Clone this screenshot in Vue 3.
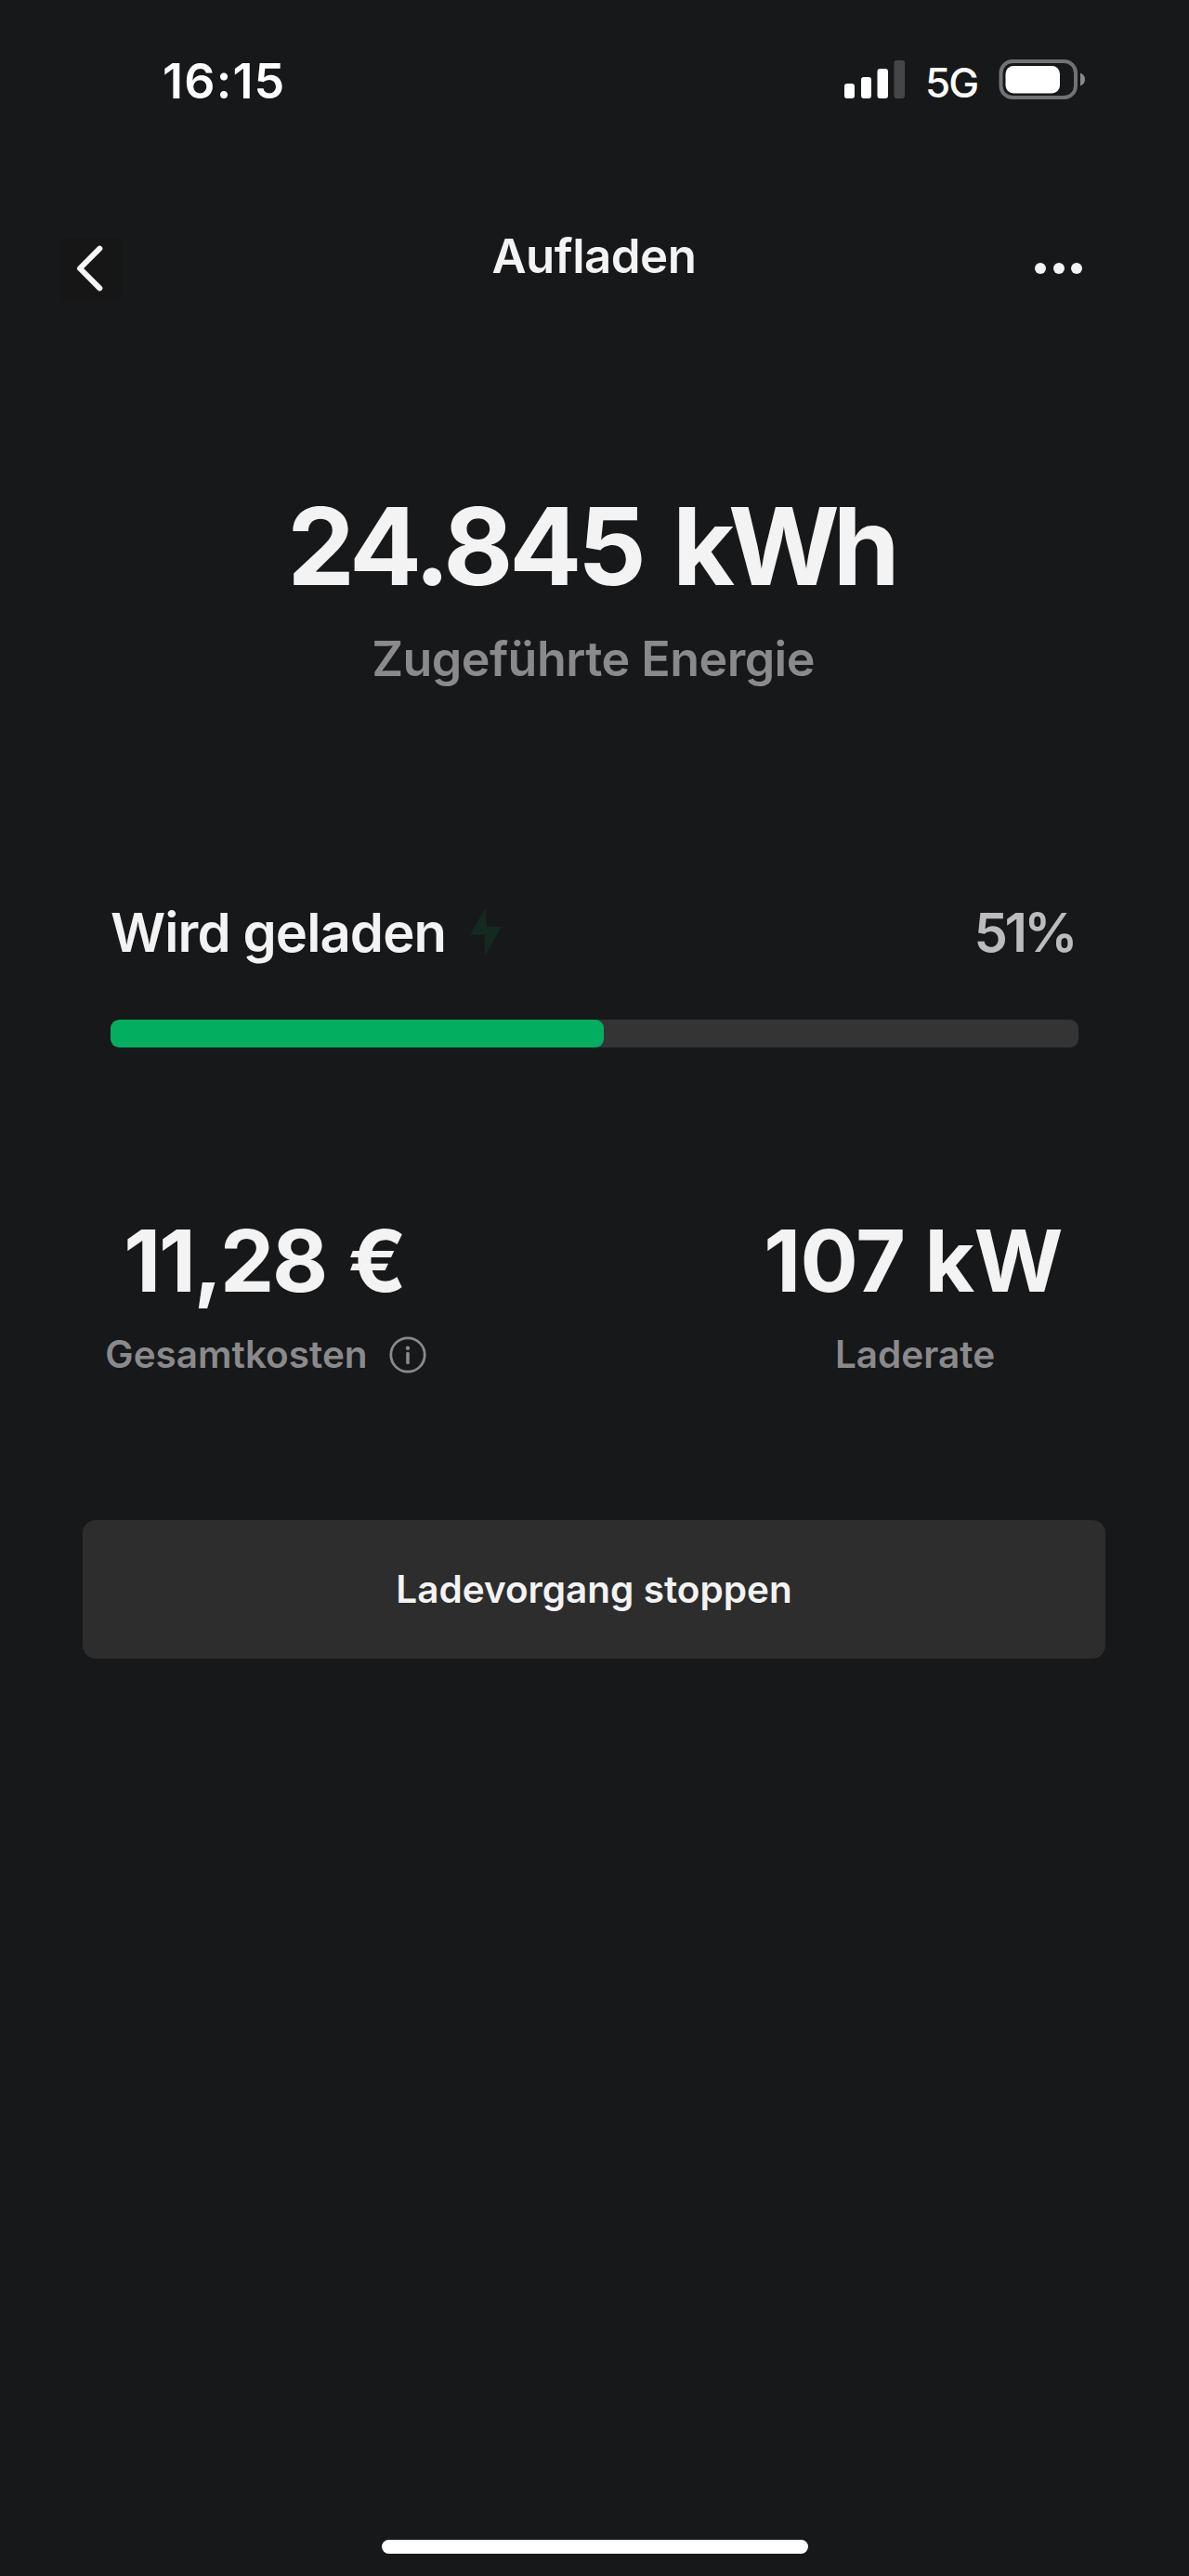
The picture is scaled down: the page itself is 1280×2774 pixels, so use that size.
<template>
  <div class="screen">
    <div class="status-bar">
      <span class="time">16:15</span>
      <div class="status-right">
        <svg class="signal" width="66" height="42" viewBox="0 0 66 42">
          <rect x="0" y="25" width="11" height="16" rx="3" fill="#fff" />
          <rect x="18" y="18" width="11" height="23" rx="3" fill="#fff" />
          <rect x="35.5" y="9" width="11.5" height="32" rx="3" fill="#fff" />
          <rect x="53.5" y="0" width="11.5" height="41" rx="3" fill="#464648" />
        </svg>
        <span class="network">5G</span>
        <svg class="battery" width="94" height="46" viewBox="0 0 94 46">
          <rect x="2.5" y="4" width="80.5" height="39" rx="12.5" fill="none" stroke="#727274" stroke-width="4" />
          <rect x="7.5" y="9" width="58.5" height="29.5" rx="8.5" fill="#fff" />
          <path d="M88 16.500c3.400 1.200 5 3.800 5 7s-1.600 5.800-5 7z" fill="#8a8a8c" />
        </svg>
      </div>
    </div>

    <header class="nav">
      <button class="back" aria-label="Zurück">
        <svg width="66" height="66" viewBox="0 0 66 66">
          <path d="M43.300 11.700L22 33l21.300 21.300" />
        </svg>
      </button>
      <h1>Aufladen</h1>
      <button class="more" aria-label="Mehr">
        <i v-for="n in 3" :key="n"></i>
      </button>
    </header>

    <section class="energy">
      <div class="energy-value">{{ session.energy }} <span class="unit">kWh</span></div>
      <div class="energy-label">Zugeführte Energie</div>
    </section>

    <section class="progress">
      <div class="progress-head">
        <span class="progress-title">Wird geladen</span>
        <svg class="bolt" width="36" height="56" viewBox="0 0 36 56">
          <path d="M18 1L1 30.500h16V53L35 22H19z" />
        </svg>
        <span class="progress-value">{{ session.percent }}%</span>
      </div>
      <div class="track">
        <div class="fill" :style="{ width: session.percent + '%' }"></div>
      </div>
    </section>

    <section class="stats">
      <div class="stat">
        <div class="stat-value cost">{{ session.cost }}</div>
        <div class="stat-label">
          <span>Gesamtkosten</span>
          <svg width="40" height="40" viewBox="0 0 40 40">
            <circle cx="20" cy="20" r="18.200" fill="none" stroke="#8a8a8c" stroke-width="2.800" />
            <circle cx="20" cy="12.700" r="2.200" fill="#8a8a8c" />
            <path d="M20 18.500v10" stroke="#8a8a8c" stroke-width="3.600" stroke-linecap="round" />
          </svg>
        </div>
      </div>
      <div class="stat right">
        <div class="stat-value rate">{{ session.rate }}</div>
        <div class="stat-label"><span>Laderate</span></div>
      </div>
    </section>

    <button class="stop">Ladevorgang stoppen</button>

    <div class="home-indicator"></div>
  </div>
</template>

<script setup>
import { reactive } from 'vue'

const session = reactive({
  energy: '24.845',
  percent: 51,
  cost: '11,28 €',
  rate: '107 kW',
})
</script>

<style>
body { margin: 0; background: #17181a; }
</style>

<style scoped>
.screen {
  box-sizing: border-box;
  width: 1280px;
  height: 2774px;
  display: flex;
  flex-direction: column;
  background: #17181a;
  color: #f3f3f4;
  font-family: Inter, "Liberation Sans", sans-serif;
  overflow: hidden;
}
button {
  border: 0;
  padding: 0;
  color: inherit;
  font-family: inherit;
}

.status-bar {
  height: 174px;
  padding: 0 111px 0 175px;
  display: flex;
  align-items: center;
  justify-content: space-between;
  color: #fff;
}
.time { margin-top: 1px; font-size: 52px; font-weight: 600; letter-spacing: 1.2px; line-height: 60px; }
.status-right { display: flex; align-items: center; }
.signal { margin-right: 21px; margin-bottom: 2px; }
.network { font-size: 44px; font-weight: 500; line-height: 50px; width: 79px; letter-spacing: -2px; margin-top: 3px; }
.battery { margin-bottom: 4px; }

.nav {
  height: 230px;
  padding: 82px 115px 0 64px;
  box-sizing: border-box;
  display: grid;
  grid-template-columns: 66px 1fr 51px;
  align-items: start;
}
.back { width: 66px; height: 66px; background: #161616; border-radius: 6px; }
.back svg { display: block; fill: none; stroke: #f6f6f6; stroke-width: 6; stroke-linecap: round; stroke-linejoin: round; }
.nav h1 {
  margin: -10px 0 0 35px;
  font-size: 51px;
  font-weight: 600;
  line-height: 60px;
  letter-spacing: -0.5px;
  text-align: center;
}
.more { height: 66px; background: none; display: flex; align-items: center; justify-content: space-between; }
.more i { width: 12px; height: 12px; border-radius: 50%; background: #f3f3f4; }

.energy { height: 480px; padding: 114px 3px 0 0; box-sizing: border-box; text-align: center; }
.energy-value {
  padding-right: 6px;
  font-size: 115.5px;
  font-weight: 700;
  line-height: 140px;
  letter-spacing: -4.2px;
  word-spacing: 9px;
}
.unit { letter-spacing: -7px; }
.energy-label { margin-top: 22px; font-size: 52px; font-weight: 600; line-height: 60px; letter-spacing: -0.55px; color: #8a8a8c; }

.progress { padding: 90px 119px 0; }
.progress-head { display: flex; align-items: center; height: 60px; }
.progress-title { font-size: 58px; font-weight: 600; letter-spacing: -0.9px; }
.bolt { margin-left: 25px; fill: #14291f; }
.progress-value { margin-left: auto; padding-right: 4px; font-size: 58px; font-weight: 600; color: #bcbcbe; letter-spacing: -3.6px; }
.track { margin-top: 64px; height: 30px; border-radius: 9px; background: #343435; overflow: hidden; }
.fill { height: 100%; border-radius: 9px; background: #04ae60; }

.stats { padding: 169px 113px 0; display: flex; justify-content: space-between; }
.stat { width: 346px; display: flex; flex-direction: column; align-items: center; }
.stat.right { width: 364px; }
.stat-value { font-size: 92.5px; font-weight: 700; line-height: 120px; white-space: nowrap; }
.cost { padding-right: 3px; letter-spacing: -2.3px; word-spacing: 4px; }
.rate { padding-right: 4px; letter-spacing: -0.7px; }
.stat-label {
  margin-top: 12px;
  display: flex;
  align-items: center;
  gap: 23px;
  font-size: 40.5px;
  font-weight: 600;
  line-height: 60px;
  color: #8a8a8c;
}

.stop {
  margin: 148px 90px 0 89px;
  height: 149px;
  padding-bottom: 1px;
  border-radius: 14px;
  background: #2d2d2d;
  font-size: 40.5px;
  font-weight: 600;
}

.home-indicator {
  width: 459px;
  height: 15px;
  margin: auto auto 24px;
  border-radius: 8px;
  background: #fff;
}
</style>
